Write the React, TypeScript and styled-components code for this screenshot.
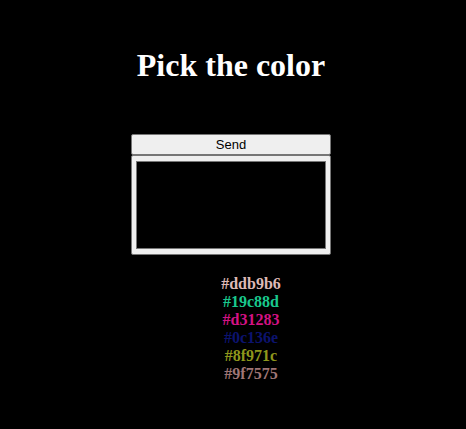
import React, { useState } from "react";
import styled, { createGlobalStyle } from "styled-components";

const GlobalStyle = createGlobalStyle`
  body {
    margin: 0;
    background: #000;
    font-family: "Liberation Serif", "Times New Roman", serif;
    font-size: 16px;
  }
`;

const Page = styled.main`
  display: flex;
  flex-direction: column;
  align-items: center;
  box-sizing: border-box;
  padding: 47px 4px 0 0;
`;

const Title = styled.h1`
  margin: 0;
  color: #fff;
  font-size: 32px;
  line-height: 36px;
`;

const Form = styled.form`
  display: flex;
  flex-direction: column;
  width: 200px;
  margin: 51px 0 0;
`;

const SendButton = styled.button`
  box-sizing: border-box;
  height: 21px;
  padding: 0;
  border: 1px solid #767676;
  border-radius: 2px;
  background: #efefef;
  color: #000;
  font: 13px "Liberation Sans", Arial, sans-serif;
`;

const ColorInput = styled.input`
  box-sizing: border-box;
  width: 100%;
  height: 100px;
  margin: 0;
  padding: 5px 4px;
  border: 1px solid #767676;
  border-radius: 2px;
  background: #efefef;

  &::-webkit-color-swatch-wrapper {
    padding: 0;
  }
  &::-webkit-color-swatch {
    border: 1px solid #777;
  }
`;

const ColorList = styled.ul`
  margin: 20px 0 0;
  padding: 0 0 0 40px;
  list-style: none;
  text-align: center;
`;

const ColorItem = styled.li<{ $color: string }>`
  color: ${(p) => p.$color};
  font-weight: 700;
  line-height: 18px;
`;

const initialColors = ["#ddb9b6", "#19c88d", "#d31283", "#0c136e", "#8f971c", "#9f7575"];

export default function App() {
  const [color, setColor] = useState("#000000");
  const [colors, setColors] = useState(initialColors);

  return (
    <>
      <GlobalStyle />
      <Page>
        <Title>Pick the color</Title>
        <Form
          onSubmit={(e) => {
            e.preventDefault();
            setColors([...colors, color]);
          }}
        >
          <SendButton type="submit">Send</SendButton>
          <ColorInput
            type="color"
            aria-label="Color"
            value={color}
            onChange={(e) => setColor(e.target.value)}
          />
        </Form>
        <ColorList>
          {colors.map((c, i) => (
            <ColorItem key={i} $color={c}>
              {c}
            </ColorItem>
          ))}
        </ColorList>
      </Page>
    </>
  );
}
